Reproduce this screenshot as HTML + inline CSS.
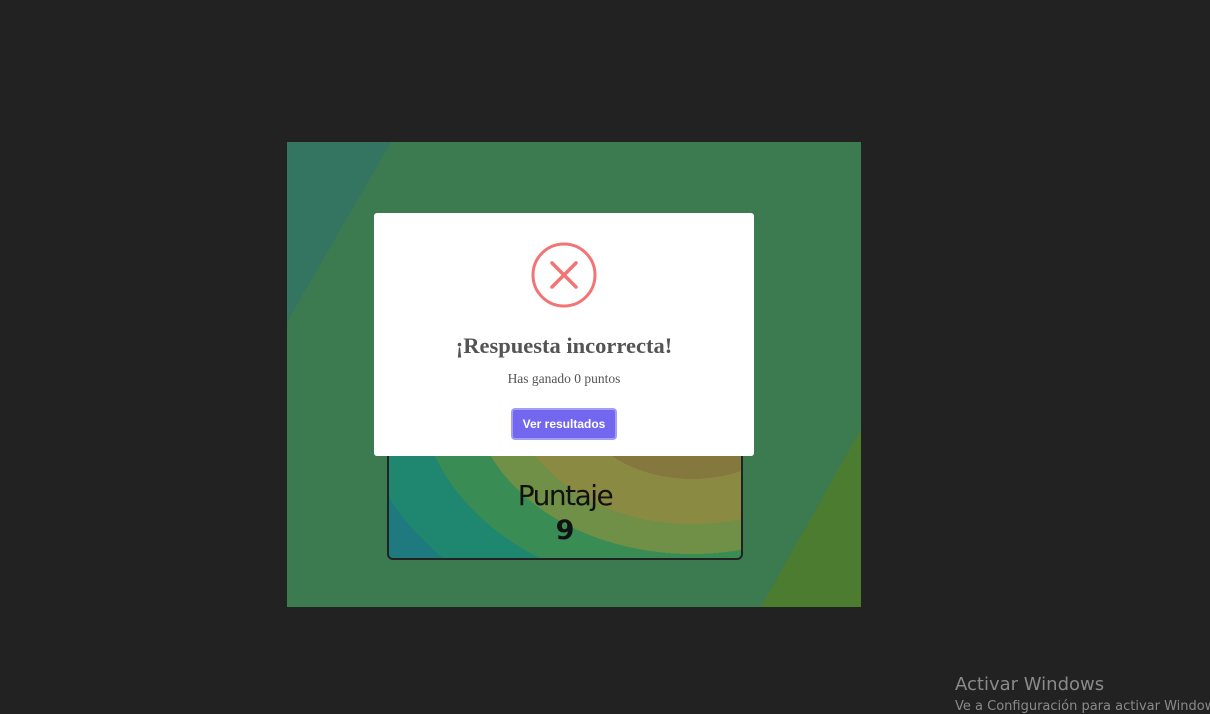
<!DOCTYPE html>
<html><head><meta charset="utf-8"><style>
html,body{margin:0;padding:0;width:1210px;height:710px;overflow:hidden;background:#222;font-family:"Liberation Sans",sans-serif}
.panel{position:absolute;left:287px;top:142px;width:574px;height:465px;background:#3c7a50;overflow:hidden}
.tri1{position:absolute;left:0;top:0;width:0;height:0;border-top:180px solid #337560;border-right:104px solid transparent}
.tri2{position:absolute;right:0;bottom:0;width:0;height:0;border-bottom:178px solid #4c7c30;border-left:100px solid transparent}
.score{position:absolute;left:100px;top:290px;width:352px;height:126px;border:2px solid #222;border-top:none;border-radius:0 0 6px 6px;overflow:hidden;
background:radial-gradient(ellipse 400px 300px at 303px -43px,#85783e 0 30%,#8a8a42 30% 45%,#6f9046 45% 55%,#3a8c55 55% 68%,#1f8770 68% 84%,#1e7a7e 84% 97%,#31718a 97%)}
.score .t{position:absolute;width:100%;text-align:center;top:47px;font-size:28px;color:#111;font-family:"DejaVu Sans",sans-serif;letter-spacing:-1.5px}
.score .n{position:absolute;width:100%;text-align:center;top:83px;font-size:27px;color:#111;font-family:"DejaVu Sans",sans-serif;font-weight:bold}
.modal{position:absolute;left:374px;top:213px;width:380px;height:243px;background:#fff;border-radius:3px;text-align:center}
.modal h2{margin:0;position:absolute;top:120px;width:100%;font-family:"Liberation Serif",serif;font-size:22.5px;color:#545454;font-weight:bold}
.modal p{margin:0;position:absolute;top:158px;width:100%;font-family:"Liberation Serif",serif;font-size:13.5px;color:#545454}
.btn{position:absolute;left:138px;top:195px;width:102px;height:28px;background:#7367f0;border:2px solid #a59df5;border-radius:4px;color:#fff;font-size:12px;font-weight:bold;line-height:28px;margin-left:-1px}
.wm1{position:absolute;left:955px;top:674px;font-size:18px;color:#8a8a8a;font-family:"DejaVu Sans",sans-serif}
.wm2{position:absolute;left:955px;top:699px;font-size:13px;color:#8a8a8a;font-family:"DejaVu Sans",sans-serif;white-space:nowrap}
</style></head><body>
<div class="panel"><div class="tri1"></div><div class="tri2"></div>
<div class="score"><div class="t">Puntaje</div><div class="n">9</div></div></div>
<div class="modal">
<svg style="position:absolute;left:157px;top:29px" width="66" height="66" viewBox="0 0 66 66"><circle cx="33" cy="33" r="31" fill="none" stroke="#f27474" stroke-width="3"/><path d="M21 21L45 45M45 21L21 45" stroke="#f27474" stroke-width="3.5" stroke-linecap="round"/></svg>
<h2>¡Respuesta incorrecta!</h2>
<p>Has ganado 0 puntos</p>
<div class="btn">Ver resultados</div>
</div>
<div class="wm1">Activar Windows</div>
<div class="wm2">Ve a Configuración para activar Windows.</div>
</body></html>
